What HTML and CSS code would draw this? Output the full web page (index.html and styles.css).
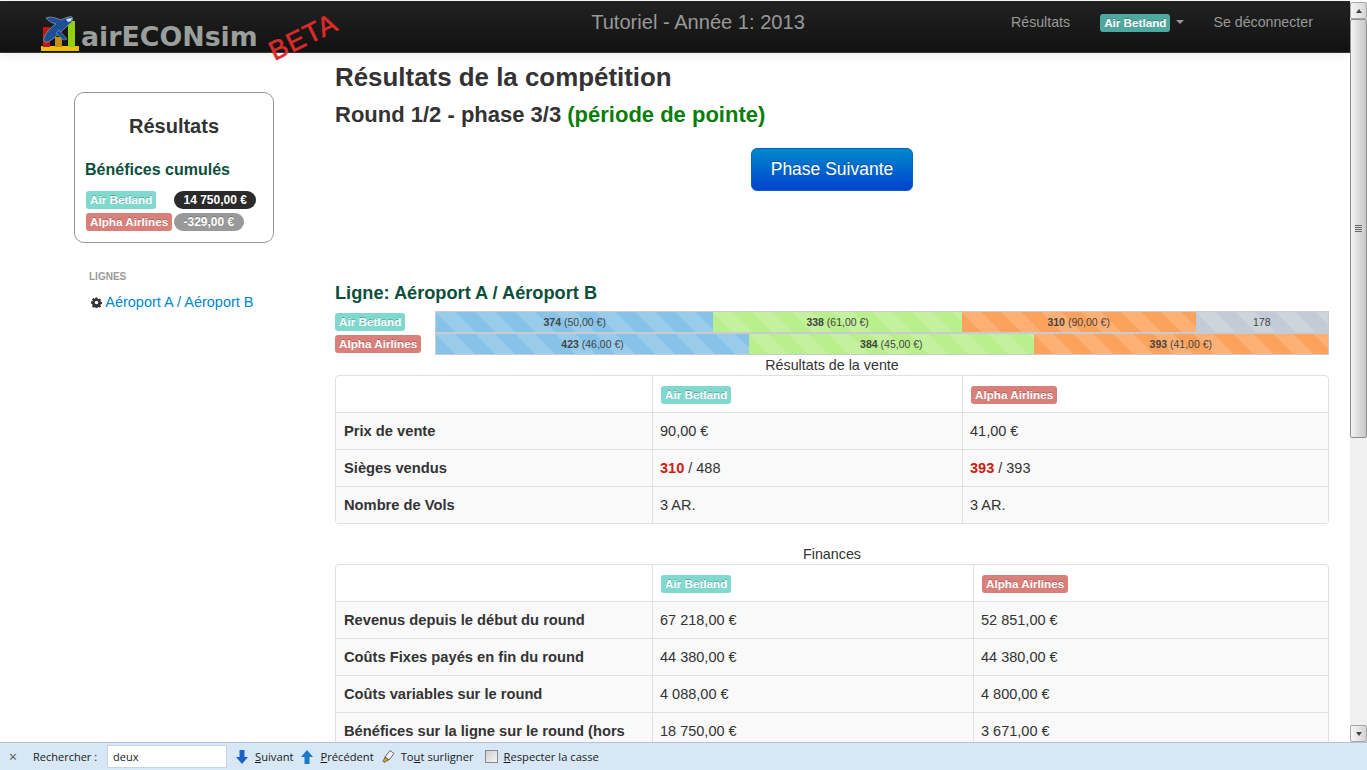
FILE: index.html
```html
<!DOCTYPE html>
<html lang="fr">
<head>
    <meta charset="UTF-8">
    <meta name="viewport" content="width=device-width, initial-scale=1.0">
    <title>airECONsim</title>
    <link rel="stylesheet" href="styles.css">
</head>
<body>
    <div class="window">
        <div class="viewport">
            <div class="page">
                <div class="navbar">
                    <div class="brand">
                        <svg class="brand-logo" width="40" height="38" viewBox="0 0 40 38">
                            <rect x="0" y="31" width="38" height="5" fill="#f0c000"/>
                            <rect x="2" y="12" width="7" height="20" fill="#c01810"/>
                            <rect x="14" y="22" width="7" height="10" fill="#c09010"/>
                            <rect x="27" y="6" width="7" height="26" fill="#90d010"/>
                            <path d="M31 2C33 5 30 8 26 11C20 17 14 23 7 27C4 28 2 26 3 23C5 17 10 12 15 9C11 8 7 6 5 3C9 1 15 3 20 5C24 3 28 1 31 2Z" fill="#1e4e96" stroke="#8a9aa8" stroke-width=".8"/>
                            <path d="M18 15L26 24C25 25 22 25 21 24L15 18Z" fill="#1e4e96" stroke="#8a9aa8" stroke-width=".6"/>
                            <path d="M25 4L31 3L30 6L27 7Z" fill="#dde4ea"/>
                        </svg>
                        <span class="brand-name">airECONsim</span>
                        <span class="brand-beta">BETA</span>
                    </div>
                    <div class="nav-title">Tutoriel - Année 1: 2013</div>
                    <div class="nav-links">
                        <a class="nav-link">Résultats</a>
                        <a class="nav-link nav-company"><span class="label label-nav">Air Betland</span><span class="caret"></span></a>
                        <a class="nav-link">Se déconnecter</a>
                    </div>
                </div>

                <div class="layout">
                    <div class="sidebar">
                        <div class="score-box">
                            <div class="score-title">Résultats</div>
                            <div class="score-subtitle">Bénéfices cumulés</div>
                            <div class="score-row">
                                <span class="score-name"><span class="label label-betland">Air Betland</span></span>
                                <span class="badge badge-dark">14 750,00 €</span>
                            </div>
                            <div class="score-row">
                                <span class="score-name"><span class="label label-alpha">Alpha Airlines</span></span>
                                <span class="badge badge-grey">-329,00 €</span>
                            </div>
                        </div>
                        <div class="side-nav">
                            <div class="side-header">LIGNES</div>
                            <a class="side-link">
                                <svg class="gear" width="11" height="11" viewBox="0 0 12 12">
                                    <path fill-rule="evenodd" fill="#333" d="M5 .5h2l.3 1.5 1 .4 1.3-.8 1.4 1.4-.8 1.3.4 1 1.5.3v2l-1.5.3-.4 1 .8 1.3-1.4 1.4-1.3-.8-1 .4-.3 1.5H5l-.3-1.5-1-.4-1.3.8-1.4-1.4.8-1.3-.4-1L0 7V5l1.5-.3.4-1-.8-1.3 1.4-1.4 1.3.8 1-.4zM6 4a2 2 0 1 0 0 4 2 2 0 0 0 0-4z"/>
                                </svg>
                                Aéroport A / Aéroport B
                            </a>
                        </div>
                    </div>

                    <div class="content">
                        <h1 class="page-title">Résultats de la compétition</h1>
                        <h2 class="round-title">Round 1/2 - phase 3/3 <span class="round-peak">(période de pointe)</span></h2>
                        <div class="next-wrap">
                            <button class="btn-next">Phase Suivante</button>
                        </div>

                        <h3 class="line-title">Ligne: Aéroport A / Aéroport B</h3>
                        <div class="demand">
                            <div class="demand-row">
                                <div class="demand-name"><span class="label label-betland">Air Betland</span></div>
                                <div class="progress">
                                    <div class="bar bar-blue" style="width: 31.1%"><b>374</b> (50,00 €)</div>
                                    <div class="bar bar-green" style="width: 27.85%"><b>338</b> (61,00 €)</div>
                                    <div class="bar bar-orange" style="width: 26.2%"><b>310</b> (90,00 €)</div>
                                    <div class="bar bar-grey" style="width: 14.85%">178</div>
                                </div>
                            </div>
                            <div class="demand-row">
                                <div class="demand-name"><span class="label label-alpha">Alpha Airlines</span></div>
                                <div class="progress">
                                    <div class="bar bar-blue" style="width: 35.1%"><b>423</b> (46,00 €)</div>
                                    <div class="bar bar-green" style="width: 31.9%"><b>384</b> (45,00 €)</div>
                                    <div class="bar bar-orange" style="width: 33%"><b>393</b> (41,00 €)</div>
                                </div>
                            </div>
                        </div>

                        <div class="table-caption">Résultats de la vente</div>
                        <table class="data-table sales-table">
                            <colgroup><col class="col-a"><col class="col-b"><col></colgroup>
                            <thead>
                                <tr><th></th><td><span class="label label-betland">Air Betland</span></td><td><span class="label label-alpha">Alpha Airlines</span></td></tr>
                            </thead>
                            <tbody>
                                <tr><th>Prix de vente</th><td>90,00 €</td><td>41,00 €</td></tr>
                                <tr><th>Sièges vendus</th><td><b class="sold">310</b> / 488</td><td><b class="sold">393</b> / 393</td></tr>
                                <tr><th>Nombre de Vols</th><td>3 AR.</td><td>3 AR.</td></tr>
                            </tbody>
                        </table>

                        <div class="table-caption finance-caption">Finances</div>
                        <table class="data-table finance-table">
                            <colgroup><col class="col-a"><col class="col-c"><col></colgroup>
                            <thead>
                                <tr><th></th><td><span class="label label-betland">Air Betland</span></td><td><span class="label label-alpha">Alpha Airlines</span></td></tr>
                            </thead>
                            <tbody>
                                <tr><th>Revenus depuis le début du round</th><td>67 218,00 €</td><td>52 851,00 €</td></tr>
                                <tr><th>Coûts Fixes payés en fin du round</th><td>44 380,00 €</td><td>44 380,00 €</td></tr>
                                <tr><th>Coûts variables sur le round</th><td>4 088,00 €</td><td>4 800,00 €</td></tr>
                                <tr><th>Bénéfices sur la ligne sur le round (hors taxes)</th><td>18 750,00 €</td><td>3 671,00 €</td></tr>
                            </tbody>
                        </table>
                    </div>
                </div>
            </div>

            <div class="scrollbar">
                <div class="scroll-btn"><span class="arrow-up"></span></div>
                <div class="scroll-track">
                    <div class="scroll-thumb"><span class="grip"></span></div>
                </div>
                <div class="scroll-btn"><span class="arrow-down"></span></div>
            </div>
        </div>

        <div class="findbar">
            <span class="find-close">×</span>
            <span class="find-label">Rechercher :</span>
            <input class="find-input" type="text" value="deux">
            <span class="find-item">
                <svg width="14" height="16" viewBox="0 0 14 16"><path d="M4.5 1h5v7H13L7 15 1 8h3.5z" fill="#1a63c4"/></svg>
                <span><u>S</u>uivant</span>
            </span>
            <span class="find-item">
                <svg width="14" height="16" viewBox="0 0 14 16"><path d="M7 1l6 7H9.5v7h-5V8H1z" fill="#1a7ac8"/></svg>
                <span><u>P</u>récédent</span>
            </span>
            <span class="find-item">
                <svg width="14" height="16" viewBox="0 0 14 16"><path d="M9 1.5l4 3-5 6.5-4-3z" fill="#f2f2f2" stroke="#666"/><path d="M4 8l3.500 3-4.500 2.500-1-1z" fill="#d8a020" stroke="#333" stroke-width=".6"/></svg>
                <span>To<u>u</u>t surligner</span>
            </span>
            <span class="find-item find-check">
                <span class="checkbox"></span>
                <span><u>R</u>especter la casse</span>
            </span>
        </div>
    </div>
</body>
</html>
```

FILE: styles.css
```css
* {
    box-sizing: border-box;
}

body {
    margin: 0;
    font-family: "Liberation Sans", Arial, sans-serif;
    font-size: 14px;
    line-height: 20px;
    color: #333;
    background-color: white;
    overflow: hidden;
}

.window {
    height: 100vh;
    display: flex;
    flex-direction: column;
}

.viewport {
    flex: 1;
    min-height: 0;
    display: flex;
}

.page {
    flex: 1;
    min-width: 0;
    overflow: hidden;
}

/* navbar */
.navbar {
    height: 52px;
    margin-top: 1px;
    display: flex;
    align-items: flex-start;
    position: relative;
    background: linear-gradient(#222222, #111111);
    border-bottom: 1px solid #333;
    box-shadow: 0 1px 10px rgba(0, 0, 0, 0.1);
}

.brand {
    width: 430px;
    height: 51px;
    padding: 14px 0 0 41px;
    display: flex;
    position: relative;
}

.brand-logo {
    flex-shrink: 0;
}

.brand-name {
    font-family: "DejaVu Sans", sans-serif;
    font-weight: bold;
    font-size: 26.8px;
    line-height: 44px;
    color: #9a9f9c;
    height: 38px;
}

.brand-beta {
    position: absolute;
    left: 267px;
    top: 21px;
    font-size: 27px;
    line-height: 30px;
    color: #dd2a2a;
    transform: rotate(-26deg);
    letter-spacing: 1px;
    -webkit-text-stroke: 0.6px #dd2a2a;
}

.nav-title {
    width: 536px;
    text-align: center;
    font-size: 20.1px;
    line-height: 42px;
    color: #999;
}

.nav-links {
    flex: 1;
    display: flex;
    padding-left: 45px;
}

.nav-link {
    color: #999;
    font-size: 14.2px;
    line-height: 42px;
    margin-right: 30px;
}

.nav-company {
    display: flex;
    align-items: center;
    height: 44px;
    margin-right: 29px;
}

.caret {
    width: 0;
    height: 0;
    margin-left: 6px;
    margin-top: -2px;
    border-left: 4px solid transparent;
    border-right: 4px solid transparent;
    border-top: 4px solid #999;
}

/* labels and badges */
.label {
    display: inline-block;
    padding: 2px 4px;
    font-size: 11.7px;
    font-weight: bold;
    line-height: 14px;
    color: white;
    border-radius: 3px;
    text-shadow: 0 -1px 0 rgba(0, 0, 0, 0.25);
    white-space: nowrap;
    vertical-align: middle;
}

.label-betland {
    background-color: #7fd9cf;
}

.label-alpha {
    background-color: #d9807a;
}

.label-nav {
    background-color: #4fa89f;
}

.badge {
    display: inline-block;
    padding: 2px 9.5px;
    font-size: 12px;
    font-weight: bold;
    line-height: 14px;
    color: white;
    border-radius: 9px;
    text-shadow: 0 -1px 0 rgba(0, 0, 0, 0.25);
}

.badge-dark {
    background-color: #2b2b2b;
}

.badge-grey {
    background-color: #999;
}

/* layout */
.layout {
    display: flex;
}

.sidebar {
    width: 335px;
    padding: 39px 0 0 74px;
    flex-shrink: 0;
}

.score-box {
    width: 200px;
    height: 151px;
    padding: 11px 10px;
    border: 1px solid #999;
    border-radius: 10px;
}

.score-title {
    text-align: center;
    font-size: 20px;
    font-weight: bold;
    line-height: 44px;
}

.score-subtitle {
    margin-top: 10px;
    margin-bottom: 7px;
    font-size: 16px;
    font-weight: bold;
    line-height: 24px;
    color: #0b4f3c;
}

.score-row {
    display: flex;
    height: 22px;
    align-items: center;
}

.score-name {
    display: flex;
    width: 89px;
    flex-shrink: 0;
    padding-left: 1px;
}

.side-nav {
    padding: 27px 0 0 15px;
}

.side-header {
    font-size: 10px;
    font-weight: bold;
    line-height: 14px;
    color: #999;
    text-shadow: 0 1px 0 rgba(255, 255, 255, 0.5);
}

.side-link {
    display: block;
    margin-top: 8px;
    padding-left: 2px;
    font-size: 14.5px;
    color: #0088cc;
    line-height: 20px;
}

.gear {
    vertical-align: -1px;
}

/* main column */
.content {
    width: 994px;
    flex-shrink: 0;
}

.page-title {
    margin: 9px 0 0;
    font-size: 25.9px;
    line-height: 30px;
}

.round-title {
    margin: 8px 0 0;
    font-size: 22px;
    line-height: 30px;
}

.round-peak {
    color: #0a7d0a;
}

.next-wrap {
    margin-top: 18px;
    text-align: center;
    height: 43px;
}

.btn-next {
    width: 162px;
    height: 43px;
    padding: 0;
    font-family: inherit;
    font-size: 17.5px;
    color: white;
    text-shadow: 0 -1px 0 rgba(0, 0, 0, 0.25);
    background: linear-gradient(#0088cc, #0044cc);
    border: 1px solid #0a5fc0;
    border-radius: 6px;
}

.line-title {
    margin: 90px 0 0;
    font-size: 18.2px;
    line-height: 24px;
    color: #0b4f3c;
}

.demand {
    margin-top: 6px;
}

.demand-row {
    display: flex;
    height: 22px;
}

.demand-name {
    width: 100px;
    flex-shrink: 0;
}

.progress {
    flex: 1;
    display: flex;
    height: 22px;
    border: 1px solid #c8ccd0;
}

.bar {
    font-size: 10.5px;
    line-height: 20px;
    text-align: center;
    color: #444;
    background-size: 40px 40px;
    background-image: linear-gradient(45deg, rgba(255, 255, 255, 0.15) 25%, transparent 25%, transparent 50%, rgba(255, 255, 255, 0.15) 50%, rgba(255, 255, 255, 0.15) 75%, transparent 75%, transparent);
}

.bar-blue {
    background-color: #87c3e8;
}

.bar-green {
    background-color: #b9ef8c;
}

.bar-orange {
    background-color: #fba25c;
}

.bar-grey {
    background-color: #c3ccd6;
}

.table-caption {
    text-align: center;
    font-size: 14.3px;
    line-height: 20px;
}

.finance-caption {
    margin-top: 20px;
}

.data-table {
    width: 100%;
    table-layout: fixed;
    border-collapse: separate;
    border-spacing: 0;
    border: 1px solid #e0e0e0;
    border-radius: 4px;
}

.data-table th,
.data-table td {
    padding: 8px;
    text-align: left;
    font-size: 14.5px;
    line-height: 20px;
    vertical-align: top;
    border-top: 1px solid #e0e0e0;
    border-left: 1px solid #e0e0e0;
}

.data-table td {
    padding-left: 7px;
}

.data-table .label {
    margin-left: 1px;
}

.data-table th {
    font-size: 14.7px;
}

.data-table th:first-child {
    border-left: 0;
}

.data-table thead th,
.data-table thead td {
    border-top: 0;
}

.data-table tbody tr {
    background-color: #f9f9f9;
}

.col-a {
    width: 316px;
}

.col-b {
    width: 310px;
}

.col-c {
    width: 321px;
}

.sold {
    color: #cc2010;
}

/* browser scrollbar */
.scrollbar {
    width: 17px;
    margin-top: 2px;
    display: flex;
    flex-direction: column;
    background-color: #f0f0f0;
}

.scroll-btn {
    height: 17px;
    display: flex;
    align-items: center;
    justify-content: center;
    background: linear-gradient(to right, #f6f6f6, #d4d4d4);
    border: 1px solid #a8a8a8;
    border-radius: 2px;
}

.arrow-up {
    border-left: 3px solid transparent;
    border-right: 3px solid transparent;
    border-bottom: 4px solid #444;
}

.arrow-down {
    border-left: 3px solid transparent;
    border-right: 3px solid transparent;
    border-top: 4px solid #444;
}

.scroll-track {
    flex: 1;
}

.scroll-thumb {
    height: 419px;
    display: flex;
    align-items: center;
    justify-content: center;
    background: linear-gradient(to right, #f4f4f4, #dcdcdc 50%, #c8c8c8);
    border: 1px solid #8e8e8e;
    border-radius: 2px;
}

.grip {
    width: 7px;
    height: 7px;
    background: repeating-linear-gradient(#666 0, #666 1px, #ddd 1px, #ddd 2px);
}

/* find in page bar */
.findbar {
    height: 28px;
    flex-shrink: 0;
    display: flex;
    align-items: center;
    padding-left: 9px;
    font-family: "Open Sans", sans-serif;
    font-size: 11.2px;
    color: #1a1a1a;
    background-color: #d8e7f5;
    border-top: 1px solid #b4c4d4;
}

.find-close {
    width: 12px;
    font-size: 14px;
    color: #555;
    margin-right: 12px;
}

.find-label {
    width: 65px;
    margin-right: 9px;
    white-space: nowrap;
    font-size: 11px;
}

.find-input {
    width: 120px;
    height: 23px;
    padding: 0 5px;
    margin-right: 8px;
    font-family: inherit;
    font-size: 11px;
    color: #1a1a1a;
    background-color: white;
    border: 1px solid #c8d6e2;
}

.find-item {
    display: flex;
    align-items: center;
    gap: 6px;
    margin-right: 7px;
    white-space: nowrap;
}

.find-check {
    margin-left: 4px;
}

.checkbox {
    width: 13px;
    height: 13px;
    background: linear-gradient(135deg, #d0d0d0, #f4f4f4);
    border: 1px solid #8a8a8a;
}
```
